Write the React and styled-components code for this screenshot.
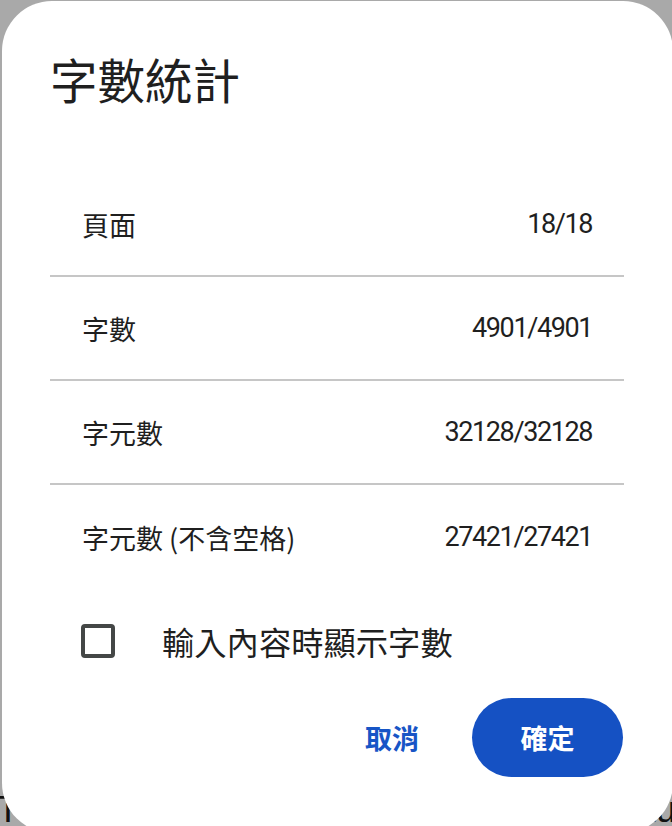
import React from 'react';
import styled, { createGlobalStyle } from 'styled-components';

const Global = createGlobalStyle`
  html, body {
    margin: 0;
    padding: 0;
    overflow: hidden;
    background: #a9a9a9;
  }
  body {
    font-family: Roboto, "Noto Sans CJK TC", sans-serif;
  }
`;

const Page = styled.div`
  position: relative;
  width: 672px;
  height: 826px;
  overflow: hidden;
  background: #a9a9a9;
  box-sizing: border-box;
  padding-top: 788px;
`;

const DocLine = styled.div`
  display: flex;
  justify-content: space-between;
  margin: 0 -4px 0 -3px;
  font-family: "Liberation Sans", Arial, sans-serif;
  font-size: 36px;
  line-height: 44px;
  color: #111;
`;

const Dialog = styled.div`
  position: absolute;
  left: 2px;
  top: 1px;
  width: 671px;
  height: 832px;
  box-sizing: border-box;
  padding: 50px 49px 0 48px;
  background: #fff;
  border-radius: 50px;
  display: flex;
  flex-direction: column;
  color: #1f1f1f;
`;

const Title = styled.h1`
  margin: 0 0 66px;
  font-size: 47.5px;
  line-height: 56px;
  font-weight: 400;
  font-family: "Noto Sans CJK TC", sans-serif;
`;

const StatList = styled.div`
  display: flex;
  flex-direction: column;
`;

const StatRow = styled.div`
  display: flex;
  justify-content: space-between;
  align-items: center;
  height: 104px;
  box-sizing: border-box;
  padding: 0 32px;
  border-bottom: ${p => (p.$last ? 'none' : '2px solid #c6c6c6')};
`;

const StatLabel = styled.span`
  font-family: "Noto Sans CJK TC", sans-serif;
  font-size: 27px;
`;

const StatValue = styled.span`
  font-family: Roboto, sans-serif;
  font-size: 27px;
  letter-spacing: -1.4px;
`;

const CheckRow = styled.label`
  display: flex;
  align-items: center;
  gap: 47px;
  height: 48px;
  margin-top: 28px;
  padding-left: 31px;
  font-family: "Noto Sans CJK TC", sans-serif;
  font-size: 32.3px;
  cursor: pointer;
`;

const Box = styled.span`
  width: 34px;
  height: 34px;
  box-sizing: border-box;
  border: 4px solid #444746;
  border-radius: 4px;
  flex: none;
`;

const Actions = styled.div`
  display: flex;
  justify-content: flex-end;
  align-items: center;
  gap: 29px;
  margin-top: 33px;
  padding-right: 1px;
`;

const Button = styled.button`
  height: 79px;
  border: none;
  border-radius: 40px;
  font-family: "Noto Sans CJK TC", sans-serif;
  font-size: 27px;
  font-weight: 700;
  cursor: pointer;
  background: ${p => (p.$primary ? '#1551c3' : 'transparent')};
  color: ${p => (p.$primary ? '#fff' : '#1755c6')};
  width: ${p => (p.$primary ? '151px' : 'auto')};
  padding: ${p => (p.$primary ? '0' : '0 24px')};
`;

const stats = [
  { label: '頁面', value: '18/18' },
  { label: '字數', value: '4901/4901' },
  { label: '字元數', value: '32128/32128' },
  { label: '字元數 (不含空格)', value: '27421/27421' },
];

export default function App() {
  return (
    <>
      <Global />
      <Page>
        <DocLine>
          <span>Th</span>
          <span>tu</span>
        </DocLine>
        <Dialog>
          <Title>字數統計</Title>
          <StatList>
            {stats.map((s, i) => (
              <StatRow key={s.label} $last={i === stats.length - 1}>
                <StatLabel>{s.label}</StatLabel>
                <StatValue>{s.value}</StatValue>
              </StatRow>
            ))}
          </StatList>
          <CheckRow>
            <Box />
            <span>輸入內容時顯示字數</span>
          </CheckRow>
          <Actions>
            <Button>取消</Button>
            <Button $primary>確定</Button>
          </Actions>
        </Dialog>
      </Page>
    </>
  );
}
